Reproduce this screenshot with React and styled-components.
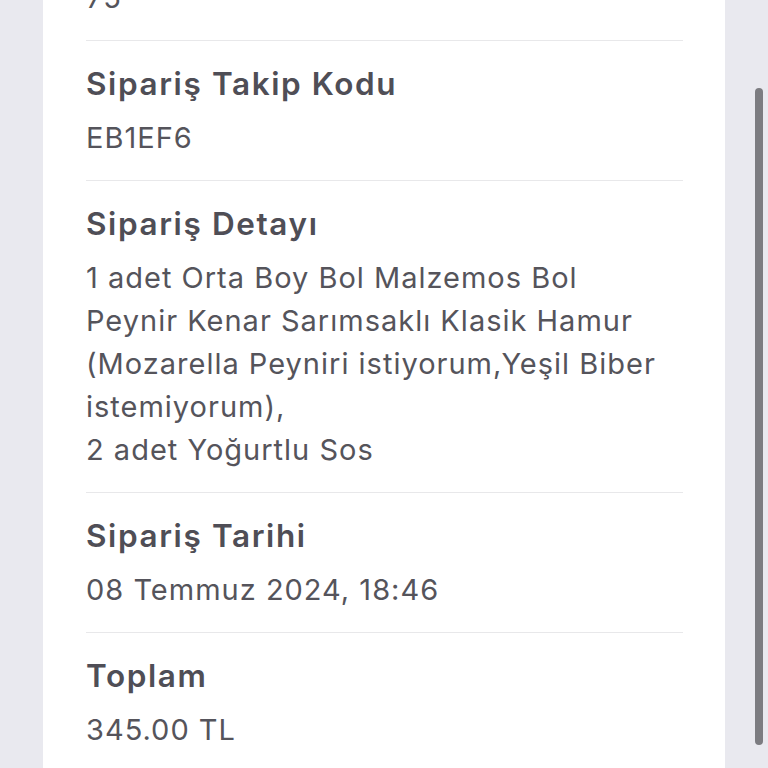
import React from "react";
import styled, { createGlobalStyle } from "styled-components";

const GlobalStyle = createGlobalStyle`
  html, body {
    margin: 0;
    padding: 0;
    background: #e9e9ef;
  }
  body {
    font-family: Inter, "Open Sans", sans-serif;
  }
`;

const Page = styled.div`
  position: relative;
  height: 768px;
  overflow: hidden;
  background-color: #e9e9ef;
  display: flex;
`;

const Card = styled.div`
  margin-left: 43px;
  margin-top: -24px;
  width: 682px;
  background-color: #fff;
  padding: 0 42px 0 43px;
  box-sizing: border-box;
  display: flex;
  flex-direction: column;
`;

const Section = styled.div`
  padding: ${(p) => (p.$first ? "0" : "24px")} 0 21px;
  border-bottom: 1px solid #e8e8ea;
  display: flex;
  flex-direction: column;
  gap: 13px;
`;

const Label = styled.div`
  font-size: 31.5px;
  line-height: 38px;
  font-weight: 600;
  letter-spacing: 1.6px;
  color: #4f4e56;
`;

const Value = styled.div`
  font-size: 29px;
  line-height: 43px;
  font-weight: 400;
  letter-spacing: 1px;
  color: #55545b;
`;

const ScrollBar = styled.div`
  position: absolute;
  left: 755px;
  top: 88px;
  width: 8px;
  height: 657px;
  border-radius: 4px;
  background-color: #7c7c81;
`;

const rows = [
  { label: "Sipariş Takip Kodu", value: ["EB1EF6"] },
  {
    label: "Sipariş Detayı",
    value: [
      "1 adet Orta Boy Bol Malzemos Bol",
      "Peynir Kenar Sarımsaklı Klasik Hamur",
      "(Mozarella Peyniri istiyorum,Yeşil Biber",
      "istemiyorum),",
      "2 adet Yoğurtlu Sos",
    ],
  },
  { label: "Sipariş Tarihi", value: ["08 Temmuz 2024, 18:46"] },
  { label: "Toplam", value: ["345.00 TL"] },
];

const App = () => {
  return (
    <>
      <GlobalStyle />
      <Page>
        <Card>
          <Section $first>
            <Value>75</Value>
          </Section>
          {rows.map((r) => (
            <Section key={r.label}>
              <Label>{r.label}</Label>
              <Value>
                {r.value.map((line, i) => (
                  <div key={i}>{line}</div>
                ))}
              </Value>
            </Section>
          ))}
        </Card>
        <ScrollBar />
      </Page>
    </>
  );
};

export default App;
